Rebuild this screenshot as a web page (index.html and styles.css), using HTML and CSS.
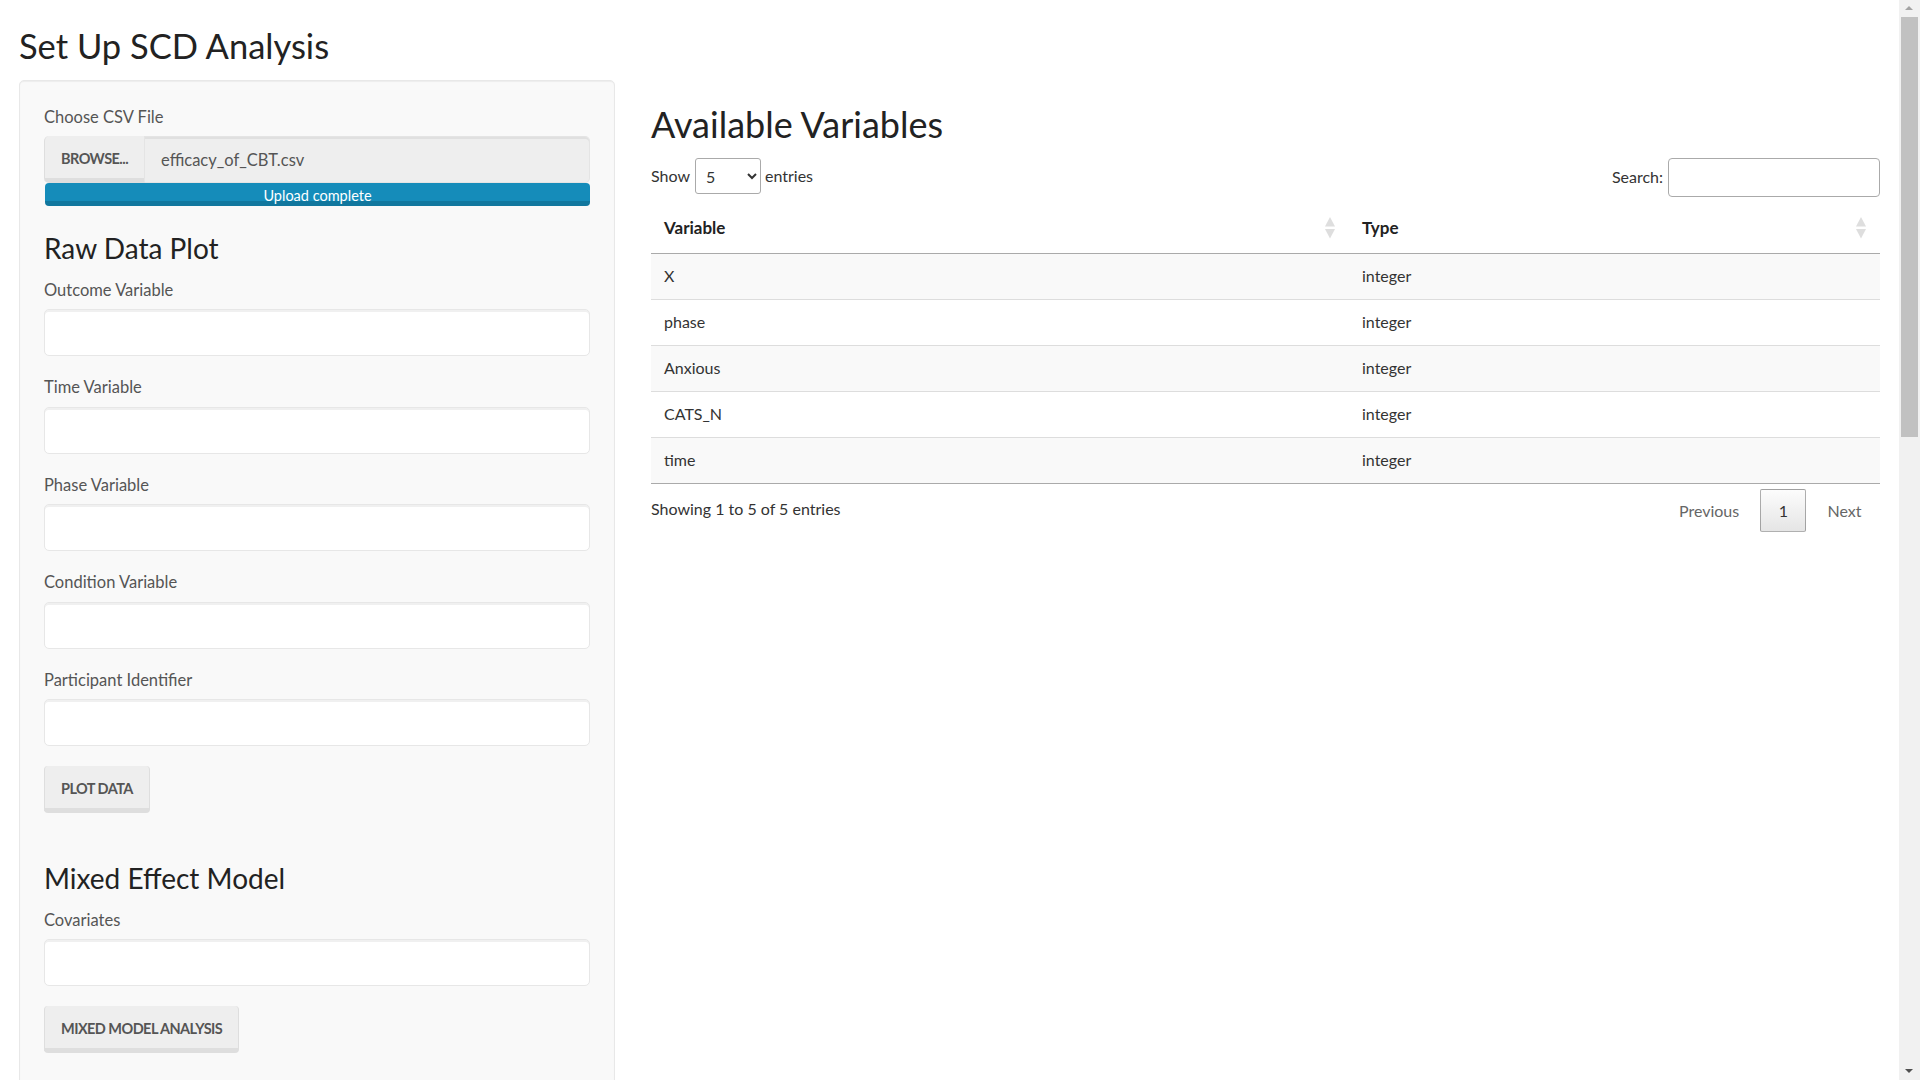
FILE: index.html
```html
<!DOCTYPE html>
<html lang="en">
<head>
<meta charset="UTF-8" />
<meta name="viewport" content="width=device-width, initial-scale=1" />
<title>Set Up SCD Analysis</title>
<link rel="stylesheet" href="styles.css">
</head>
<body>

<div class="page">
  <h2 class="page-title">Set Up SCD Analysis</h2>

  <div class="layout">
    <div class="well">
      <div class="control-label first">Choose CSV File</div>
      <div class="file-input">
        <span class="btn btn-file">Browse...</span>
        <input class="file-name" type="text" value="efficacy_of_CBT.csv" readonly />
      </div>
      <div class="progress">
        <div class="progress-bar">Upload complete</div>
      </div>

      <h3 class="section-title">Raw Data Plot</h3>
      <div class="form-group">
        <label class="control-label">Outcome Variable</label>
        <input class="form-control" type="text" />
      </div>
      <div class="form-group">
        <label class="control-label">Time Variable</label>
        <input class="form-control" type="text" />
      </div>
      <div class="form-group">
        <label class="control-label">Phase Variable</label>
        <input class="form-control" type="text" />
      </div>
      <div class="form-group">
        <label class="control-label">Condition Variable</label>
        <input class="form-control" type="text" />
      </div>
      <div class="form-group">
        <label class="control-label">Participant Identifier</label>
        <input class="form-control" type="text" />
      </div>
      <div class="action">
        <button class="btn">Plot Data</button>
      </div>

      <h3 class="section-title">Mixed Effect Model</h3>
      <div class="form-group">
        <label class="control-label">Covariates</label>
        <input class="form-control" type="text" />
      </div>
      <div class="action last">
        <button class="btn">Mixed Model Analysis</button>
      </div>
    </div>

    <div class="main">
      <h2 class="main-title">Available Variables</h2>

      <div class="dt-top">
        <div class="dt-length">
          <span>Show</span>
          <select class="dt-select">
            <option selected>5</option>
            <option>10</option>
            <option>25</option>
          </select>
          <span>entries</span>
        </div>
        <div class="dt-search">
          <span>Search:</span>
          <input class="dt-search-input" type="search" />
        </div>
      </div>

      <table class="dt-table">
        <thead>
          <tr>
            <th class="col-var">Variable<svg class="sort" width="10" height="22" viewBox="0 0 10 22"><polygon points="5,0 10,9.5 0,9.5" fill="#dedede"/><polygon points="0,12 10,12 5,21.5" fill="#dedede"/></svg></th>
            <th>Type<svg class="sort" width="10" height="22" viewBox="0 0 10 22"><polygon points="5,0 10,9.5 0,9.5" fill="#dedede"/><polygon points="0,12 10,12 5,21.5" fill="#dedede"/></svg></th>
          </tr>
        </thead>
        <tbody>
          <tr><td>X</td><td>integer</td></tr>
          <tr><td>phase</td><td>integer</td></tr>
          <tr><td>Anxious</td><td>integer</td></tr>
          <tr><td>CATS_N</td><td>integer</td></tr>
          <tr><td>time</td><td>integer</td></tr>
        </tbody>
      </table>

      <div class="dt-bottom">
        <div class="dt-info">Showing 1 to 5 of 5 entries</div>
        <div class="dt-paginate">
          <span class="page-btn disabled">Previous</span>
          <span class="page-btn current">1</span>
          <span class="page-btn disabled">Next</span>
        </div>
      </div>

      <div class="plot-output"></div>
    </div>
  </div>
</div>

<!-- window scrollbar (page is scrolled to top) -->
<div class="scrollbar">
  <span class="sb-arrow up"></span>
  <span class="sb-thumb"></span>
  <span class="sb-arrow down"></span>
</div>

</body>
</html>
```

FILE: styles.css
```css
html, body {
  margin: 0;
  padding: 0;
  background: #fff;
}
body {
  font-family: Lato, "Noto Sans", sans-serif;
  font-size: 16px;
  line-height: 1.4;
  color: #333;
}

.page {
  padding: 0 19px;
  margin-right: 21px;
}
.page-title {
  font-size: 34.5px;
  font-weight: 400;
  line-height: 1.1;
  color: #222;
  margin: 27px 0 14.7px;
}
.layout {
  display: flex;
  align-items: flex-start;
  gap: 36px;
}

/* sidebar */
.well {
  width: 596px;
  flex: none;
  box-sizing: border-box;
  background: #f9f9f9;
  border: 1px solid #e8e8e8;
  border-radius: 5px;
  box-shadow: inset 0 1px 1px rgba(0,0,0,0.05);
  padding: 25px 24px 6px;
}
.control-label {
  display: block;
  color: #555;
  font-size: 16.5px;
  line-height: 22.4px;
  margin-bottom: 8px;
}
.file-input {
  display: flex;
  height: 47px;
}
.btn {
  display: block;
  box-sizing: border-box;
  height: 47px;
  padding: 4px 16px 0;
  font-family: inherit;
  font-size: 14.5px;
  font-weight: 700;
  line-height: 20px;
  letter-spacing: -0.55px;
  text-transform: uppercase;
  color: #555;
  background: #eee;
  border: solid #dedede;
  border-width: 0 1px 5px 1px;
  border-radius: 4px;
  cursor: pointer;
}
.btn-file {
  width: 101px;
  flex: none;
  padding-top: 13px;
  border-radius: 5px 0 0 5px;
  border-right-color: #e4e4e4;
}
.file-name {
  flex: 1;
  min-width: 0;
  height: 47px;
  box-sizing: border-box;
  margin: 0;
  padding: 0 16px;
  font-family: inherit;
  font-size: 16.5px;
  color: #555;
  background: #eee;
  border: 1px solid #e4e4e4;
  border-left: 0;
  border-radius: 0 5px 5px 0;
  box-shadow: inset 0 2px 0 rgba(0,0,0,0.06);
  outline: none;
}
.progress {
  height: 23.3px;
  margin-left: 1px;
  border-radius: 4px;
  overflow: hidden;
  background: #f0f0f0;
}
.progress-bar {
  height: 100%;
  background: #158cba;
  box-shadow: inset 0 -5px 0 rgba(0,0,0,0.15);
  color: #fff;
  font-size: 14.5px;
  line-height: 25px;
  text-align: center;
}
.section-title {
  font-size: 28px;
  font-weight: 400;
  line-height: 1.1;
  color: #222;
  margin: 27px 0 14.8px;
}
.form-group {
  margin-bottom: 20px;
}
.form-control {
  display: block;
  width: 100%;
  height: 47px;
  box-sizing: border-box;
  margin: 0;
  padding: 0 16px;
  font-family: inherit;
  font-size: 16px;
  background: #fff;
  border: 1px solid #e7e7e7;
  border-radius: 5px;
  box-shadow: inset 0 2px 0 rgba(0,0,0,0.06);
  outline: none;
}
.action {
  display: flex;
  margin-bottom: 50px;
}
.action.last {
  margin-bottom: 40px;
}

/* main panel */
.main {
  flex: 1;
  min-width: 0;
}
.main-title {
  font-size: 36px;
  font-weight: 400;
  line-height: 1.1;
  color: #222;
  margin: 25.8px 0 13.3px;
}
.dt-top {
  display: flex;
  justify-content: space-between;
  align-items: flex-start;
  margin-bottom: 10.7px;
}
.dt-length {
  display: flex;
  align-items: center;
  height: 35.4px;
}
.dt-select {
  width: 66px;
  height: 35.4px;
  margin: 0 4px 0 5px;
  padding: 0 0 0 6px;
  font-family: inherit;
  font-size: 16px;
  color: #333;
  background: #fff;
  border: 1px solid #aaa;
  border-radius: 3px;
}
.dt-search {
  display: flex;
  align-items: center;
  height: 38.4px;
}
.dt-search-input {
  width: 212px;
  height: 38.4px;
  box-sizing: border-box;
  margin: 0 0 0 5px;
  padding: 0 6px;
  font-family: inherit;
  font-size: 16px;
  border: 1px solid #aaa;
  border-radius: 4px;
  background: #fff;
}
.dt-table {
  width: 100%;
  border-collapse: separate;
  border-spacing: 0;
}
.dt-table th {
  position: relative;
  text-align: left;
  font-size: 17px;
  font-weight: 700;
  line-height: 22.4px;
  color: #222;
  padding: 10px 13px 13.5px;
  border-bottom: 1px solid #aaa;
}
.dt-table th.col-var {
  width: 672px;
}
.sort {
  position: absolute;
  right: 14.5px;
  top: 9.3px;
}
.dt-table td {
  padding: 11px 13px 11.6px;
}
.dt-table tbody tr + tr td {
  border-top: 1px solid #ddd;
}
.dt-table tbody tr:nth-child(odd) td {
  background: #f9f9f9;
}
.dt-table tbody tr:last-child td {
  border-bottom: 1px solid #aaa;
}
.dt-bottom {
  display: flex;
  justify-content: space-between;
  align-items: flex-start;
  margin-top: 5px;
}
.dt-info {
  padding-top: 8.8px;
}
.dt-paginate {
  display: flex;
}
.page-btn {
  padding: 8.5px 17.5px;
  line-height: 24px;
  margin-left: 2.5px;
  border: 1px solid transparent;
  border-radius: 2px;
  color: #666;
}
.page-btn.current {
  color: #333;
  border-color: rgba(0,0,0,0.3);
  background: linear-gradient(to bottom, rgba(230,230,230,0.1) 0%, rgba(0,0,0,0.1) 100%);
}
.plot-output {
  height: 2140px;
}

/* scrollbar */
.scrollbar {
  position: fixed;
  top: 0;
  right: 0;
  width: 21px;
  height: 100vh;
  background: #f1f1f1;
}
.sb-thumb {
  position: absolute;
  top: 17px;
  left: 2px;
  right: 2px;
  height: 420px;
  background: #c1c1c1;
}
.sb-arrow {
  position: absolute;
  left: 6px;
  width: 0;
  height: 0;
  border-left: 4.5px solid transparent;
  border-right: 4.5px solid transparent;
}
.sb-arrow.up {
  top: 6px;
  border-bottom: 4.5px solid #a3a3a3;
}
.sb-arrow.down {
  bottom: 7px;
  border-top: 4.5px solid #505050;
}
```
